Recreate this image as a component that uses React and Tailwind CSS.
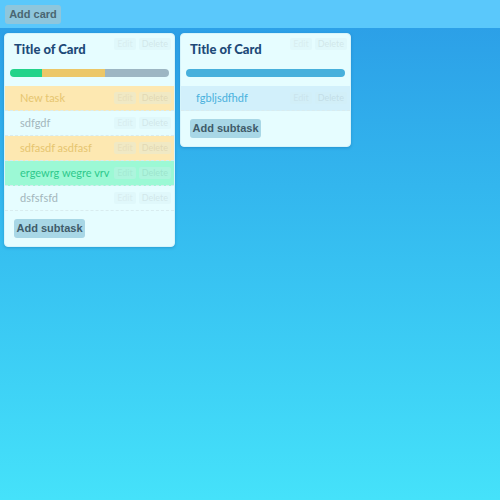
import React from 'react';

const cards = [
  {
    title: 'Title of Card',
    progress: [
      { w: 20, c: 'bg-[#22d38a]' },
      { w: 40, c: 'bg-[#ecc767]' },
      { w: 40, c: 'bg-[#9db6c3]' },
    ],
    tasks: [
      { text: 'New task', kind: 'todo' },
      { text: 'sdfgdf', kind: 'none' },
      { text: 'sdfasdf asdfasf', kind: 'todo' },
      { text: 'ergewrg wegre vrv', kind: 'done' },
      { text: 'dsfsfsfd', kind: 'none' },
    ],
  },
  {
    title: 'Title of Card',
    progress: [{ w: 100, c: 'bg-[#47b0dc]' }],
    tasks: [{ text: 'fgbljsdfhdf', kind: 'blue' }],
  },
];

const rowStyles = {
  todo: 'bg-[#fde8b1] text-[#e6c56f]',
  none: 'bg-transparent text-[#a3b6bc]',
  done: 'bg-[#9cf9d5] text-[#2ec98c]',
  blue: 'bg-[#d2f0fb] text-[#4ab1dd]',
};

function SmallButtons() {
  return (
    <div className="flex gap-[3px] opacity-30">
      <span className="rounded-[2px] bg-[#d4eef2] px-[3px] text-[9px] leading-[12px] text-[#b9c9cc]">Edit</span>
      <span className="rounded-[2px] bg-[#d4eef2] px-[3px] text-[9px] leading-[12px] text-[#a3b5b9]">Delete</span>
    </div>
  );
}

function Card({ card }) {
  return (
    <div className="w-[171px] rounded-[4px] border border-[#d6f4fb] bg-[#e6fdff] pb-[8px] shadow-[0_1px_3px_rgba(0,60,120,0.25)]">
      <div className="flex items-start justify-between pl-[9px] pr-[3px] pt-[7px]">
        <h2 className="text-[13px] font-black leading-[16px] text-[#1d4a78]">{card.title}</h2>
        <div className="-mt-[3px]"><SmallButtons /></div>
      </div>
      <div className="mx-[5px] mt-[12px] flex h-[8px] overflow-hidden rounded-full">
        {card.progress.map((p, i) => (
          <div key={i} className={p.c} style={{ width: p.w + '%' }} />
        ))}
      </div>
      <div className="mt-[9px] flex flex-col">
        {card.tasks.map((t, i) => (
          <div
            key={i}
            className={`flex h-[25px] items-center justify-between border-b border-dashed border-[#d9ecef] pl-[15px] pr-[3px] text-[11px] ${rowStyles[t.kind]}`}
          >
            <span>{t.text}</span>
            <SmallButtons />
          </div>
        ))}
      </div>
      <div className="flex px-[9px] pt-[8px]">
        <button className="h-[19px] w-[71px] rounded-[3px] bg-[#a8d7e6] text-[11px] font-bold text-[#3f5b69] [font-family:'Liberation_Sans',sans-serif]">
          Add subtask
        </button>
      </div>
    </div>
  );
}

export default function App() {
  return (
    <div className="flex h-[500px] w-[500px] flex-col overflow-hidden bg-gradient-to-b from-[#2b9ce6] to-[#45e2fa] [font-family:Lato,'Noto_Sans',sans-serif]">
      <div className="flex h-[28px] items-center bg-[#5ac8fb] px-[5px]">
        <button className="h-[19px] w-[56px] rounded-[3px] bg-[#8ec6dc] text-[11px] font-bold text-[#4a6672] [font-family:'Liberation_Sans',sans-serif]">
          Add card
        </button>
      </div>
      <div className="flex items-start gap-[5px] pl-[4px] pt-[5px]">
        {cards.map((c, i) => (
          <Card key={i} card={c} />
        ))}
      </div>
    </div>
  );
}
